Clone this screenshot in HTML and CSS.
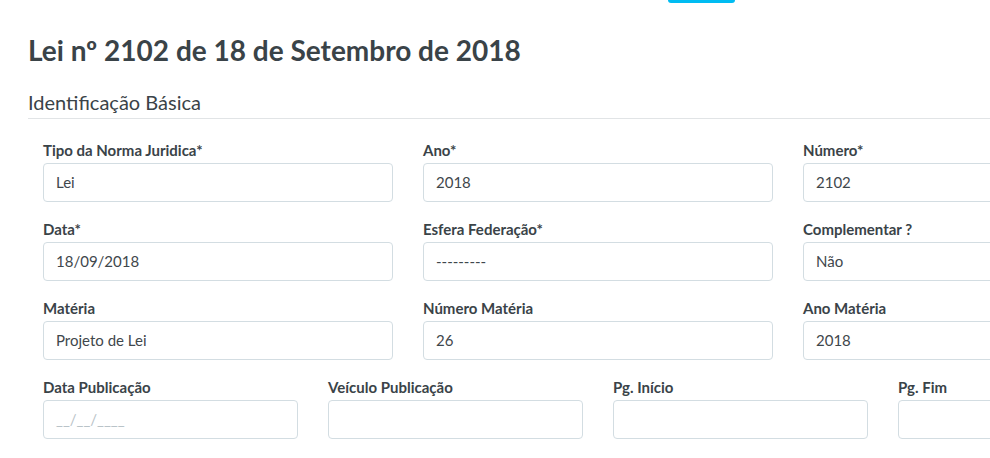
FILE: index.html
```html
<!DOCTYPE html>
<html lang="pt-BR">
<head>
<meta charset="utf-8">
<title>Lei nº 2102 de 18 de Setembro de 2018</title>
<link rel="stylesheet" href="styles.css">
</head>
<body>
<div class="toolbar"><span class="btn-info"></span></div>
<main class="container">
  <h1 class="page-title">Lei nº 2102 de 18 de Setembro de 2018</h1>
  <h2 class="section-title">Identificação Básica</h2>
  <div class="row row-3">
    <div class="field"><label>Tipo da Norma Juridica*</label><div class="input">Lei</div></div>
    <div class="field"><label>Ano*</label><div class="input">2018</div></div>
    <div class="field"><label>Número*</label><div class="input">2102</div></div>
  </div>
  <div class="row row-3">
    <div class="field"><label>Data*</label><div class="input">18/09/2018</div></div>
    <div class="field"><label>Esfera Federação*</label><div class="input">---------</div></div>
    <div class="field"><label>Complementar ?</label><div class="input">Não</div></div>
  </div>
  <div class="row row-3">
    <div class="field"><label>Matéria</label><div class="input">Projeto de Lei</div></div>
    <div class="field"><label>Número Matéria</label><div class="input">26</div></div>
    <div class="field"><label>Ano Matéria</label><div class="input">2018</div></div>
  </div>
  <div class="row row-4">
    <div class="field"><label>Data Publicação</label><div class="input placeholder">__/__/____</div></div>
    <div class="field"><label>Veículo Publicação</label><div class="input"></div></div>
    <div class="field"><label>Pg. Início</label><div class="input"></div></div>
    <div class="field"><label>Pg. Fim</label><div class="input"></div></div>
  </div>
</main>
</body>
</html>
```
FILE: styles.css
```css
html, body {
  margin: 0;
  padding: 0;
  overflow: hidden;
  background: #ffffff;
}
body {
  font-family: "Lato", "Noto Sans", sans-serif;
  color: #3a4348;
  width: 990px;
  height: 458px;
}
.toolbar {
  height: 3px;
  display: flex;
  padding-left: 668px;
}
.btn-info {
  display: block;
  width: 67px;
  height: 3px;
  background: #00bcf2;
  border-radius: 0 0 4px 4px;
}
.container {
  width: 1140px;
  padding-left: 28px;
}
.page-title {
  font-size: 28px;
  font-weight: 700;
  line-height: 36px;
  margin: 29px 0 0 0;
  color: #3a4348;
}
.section-title {
  font-size: 20px;
  font-weight: 400;
  line-height: 26px;
  margin: 21px 0 0 0;
  padding-bottom: 3px;
  border-bottom: 1px solid #e1e4e6;
  color: #3a4348;
}
.row {
  display: grid;
  margin-top: 22px;
}
.row + .row {
  margin-top: 0;
}
.row-3 { grid-template-columns: repeat(3, 380px); }
.row-4 { grid-template-columns: repeat(4, 285px); }
.field {
  padding: 0 15px;
  display: flex;
  flex-direction: column;
  height: 79px;
}
.field label {
  font-size: 15px;
  font-weight: 700;
  line-height: 18px;
  margin-bottom: 4px;
  color: #3a4348;
}
.input {
  height: 39px;
  box-sizing: border-box;
  border: 1px solid #d3dde2;
  border-radius: 4px;
  padding: 0 12px;
  font-size: 15px;
  line-height: 37px;
  color: #3f474c;
}
.input.placeholder {
  color: #b9c3c8;
}
```
